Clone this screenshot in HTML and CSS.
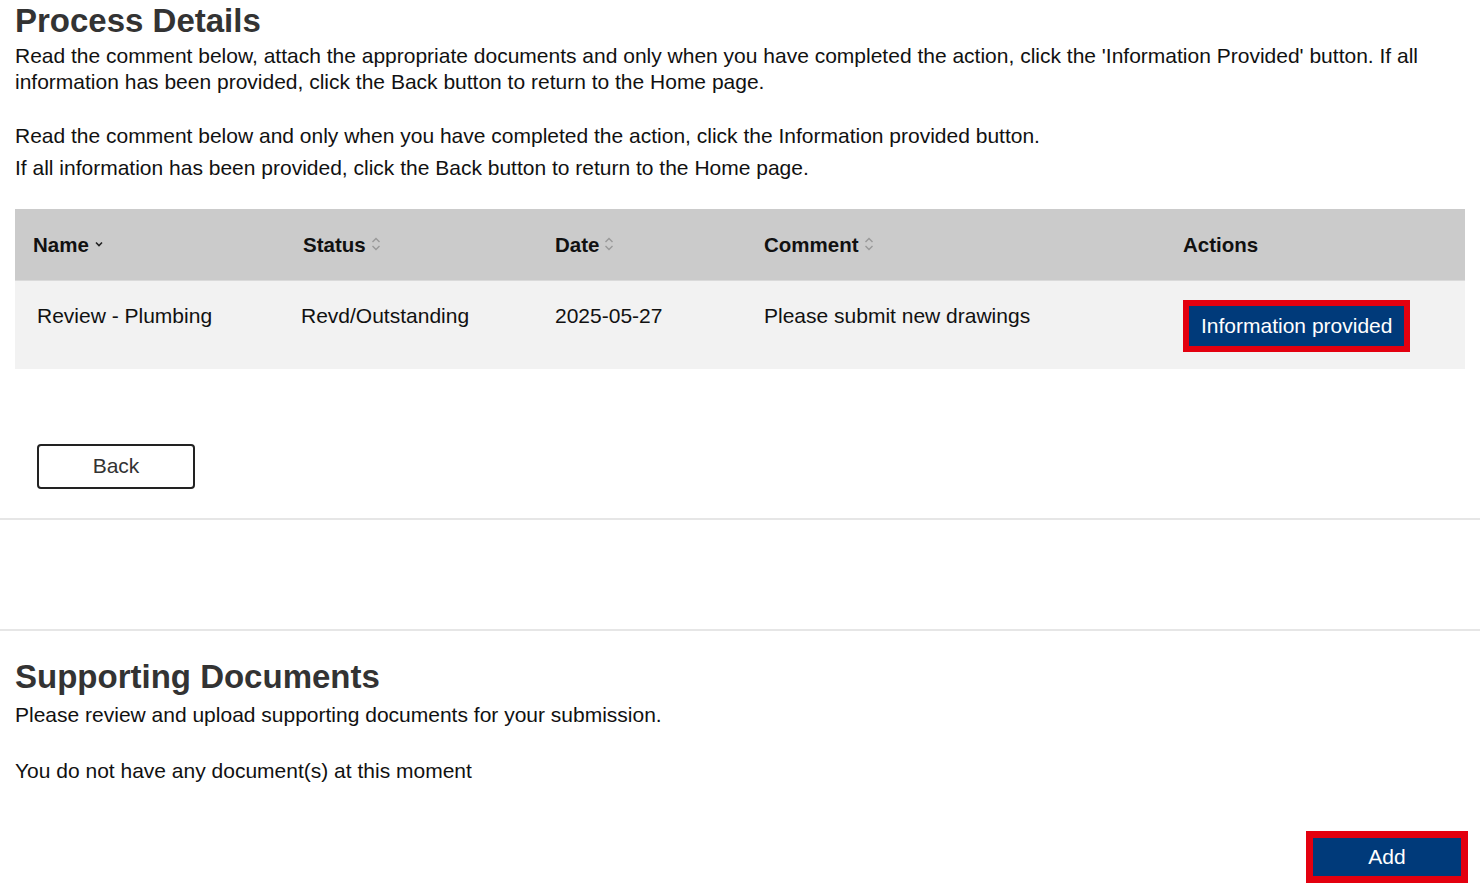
FILE: index.html
```html
<!DOCTYPE html>
<html lang="en">
<head>
  <meta charset="UTF-8">
  <title>Process Details</title>
  <link rel="stylesheet" href="styles.css">
</head>
<body>
  <section class="section">
    <h1>Process Details</h1>
    <p class="intro">Read the comment below, attach the appropriate documents and only when you have completed the action, click the 'Information Provided' button. If all information has been provided, click the Back button to return to the Home page.</p>
    <p class="note">Read the comment below and only when you have completed the action, click the Information provided button.</p>
    <p class="note">If all information has been provided, click the Back button to return to the Home page.</p>

    <table class="grid">
      <colgroup>
        <col class="w-name">
        <col class="w-status">
        <col class="w-date">
        <col class="w-comment">
        <col class="w-actions">
      </colgroup>
      <thead>
        <tr>
          <th class="c-name">Name<svg class="sort" width="10" height="10" viewBox="0 0 10 10"><path d="M2 3.5 L5 6.5 L8 3.5" fill="none" stroke="#222" stroke-width="1.6"/></svg></th>
          <th class="c-status">Status<svg class="sort" width="10" height="18" viewBox="0 0 10 18"><path d="M1.5 7 L5 3.5 L8.5 7 M1.5 11 L5 14.5 L8.5 11" fill="none" stroke="#999" stroke-width="1.4"/></svg></th>
          <th>Date<svg class="sort" width="10" height="18" viewBox="0 0 10 18"><path d="M1.5 7 L5 3.5 L8.5 7 M1.5 11 L5 14.5 L8.5 11" fill="none" stroke="#999" stroke-width="1.4"/></svg></th>
          <th>Comment<svg class="sort" width="10" height="18" viewBox="0 0 10 18"><path d="M1.5 7 L5 3.5 L8.5 7 M1.5 11 L5 14.5 L8.5 11" fill="none" stroke="#999" stroke-width="1.4"/></svg></th>
          <th>Actions</th>
        </tr>
      </thead>
      <tbody>
        <tr>
          <td class="c-name">Review - Plumbing</td>
          <td class="c-status">Revd/Outstanding</td>
          <td>2025-05-27</td>
          <td>Please submit new drawings</td>
          <td class="c-actions"><button class="btn-primary">Information provided</button></td>
        </tr>
      </tbody>
    </table>

    <div class="back-row">
      <button class="btn-back">Back</button>
    </div>
  </section>

  <div class="spacer"></div>

  <section class="section docs">
    <h2>Supporting Documents</h2>
    <p class="sub">Please review and upload supporting documents for your submission.</p>
    <p class="empty">You do not have any document(s) at this moment</p>
    <div class="add-row">
      <button class="btn-primary btn-add">Add</button>
    </div>
  </section>
</body>
</html>
```

FILE: styles.css
```css
body {
  margin: 0;
  background: #fff;
  color: #111;
  font-family: "Liberation Sans", Arial, sans-serif;
  font-size: 21px;
}

.section {
  padding: 0 15px;
}

h1, h2 {
  margin: 0;
  color: #333;
  font-size: 33px;
  font-weight: bold;
}

h1 { line-height: 42px; }
h2 { line-height: 40px; padding-top: 26px; margin-bottom: 5px; }

.intro {
  margin: 1px 0 28px;
  line-height: 26px;
}

.note {
  margin: 0 0 6px;
  line-height: 26px;
}

.grid {
  width: 100%;
  margin-top: 28px;
  border-collapse: collapse;
  table-layout: fixed;
}

.w-name { width: 286px; }
.w-status { width: 254px; }
.w-date { width: 209px; }
.w-comment { width: 419px; }

.grid th {
  background: #cbcbcb;
  height: 71px;
  text-align: left;
  font-size: 20.5px;
  font-weight: bold;
  color: #111;
  padding: 0;
  border-bottom: 1px solid #dadada;
}

.grid th.c-name { padding-left: 18px; }
.grid th.c-status { padding-left: 2px; }

.grid td {
  background: #f2f2f2;
  height: 88px;
  box-sizing: border-box;
  vertical-align: top;
  padding: 23px 0 0 0;
  line-height: 24px;
  color: #111;
}

.grid td.c-name { padding-left: 22px; }
.grid td.c-actions { padding-top: 19px; }

.sort {
  vertical-align: middle;
  margin-left: 5px;
  position: relative;
  top: -2px;
}

.btn-primary {
  background: #003a7a;
  color: #fff;
  font-family: "Liberation Sans", Arial, sans-serif;
  font-size: 21px;
  border: 6px solid #e3000f;
  padding: 0 12px;
  height: 52px;
  cursor: pointer;
}

.back-row {
  margin: 0 -15px;
  padding: 75px 0 29px 37px;
  border-bottom: 2px solid #e6e6e6;
}

.btn-back {
  width: 158px;
  height: 45px;
  background: #fff;
  color: #333;
  font-family: "Liberation Sans", Arial, sans-serif;
  font-size: 21px;
  border: 2px solid #222;
  border-radius: 4px;
  cursor: pointer;
}

.spacer {
  height: 109px;
  border-bottom: 2px solid #e6e6e6;
}

.sub {
  margin: 0;
  line-height: 26px;
}

.empty {
  margin: 30px 0 0;
  line-height: 26px;
}

.add-row {
  display: flex;
  justify-content: flex-end;
  padding-top: 47px;
  margin-right: -3px;
}

.btn-add {
  width: 162px;
  height: 52px;
  border-width: 7px;
}
```
